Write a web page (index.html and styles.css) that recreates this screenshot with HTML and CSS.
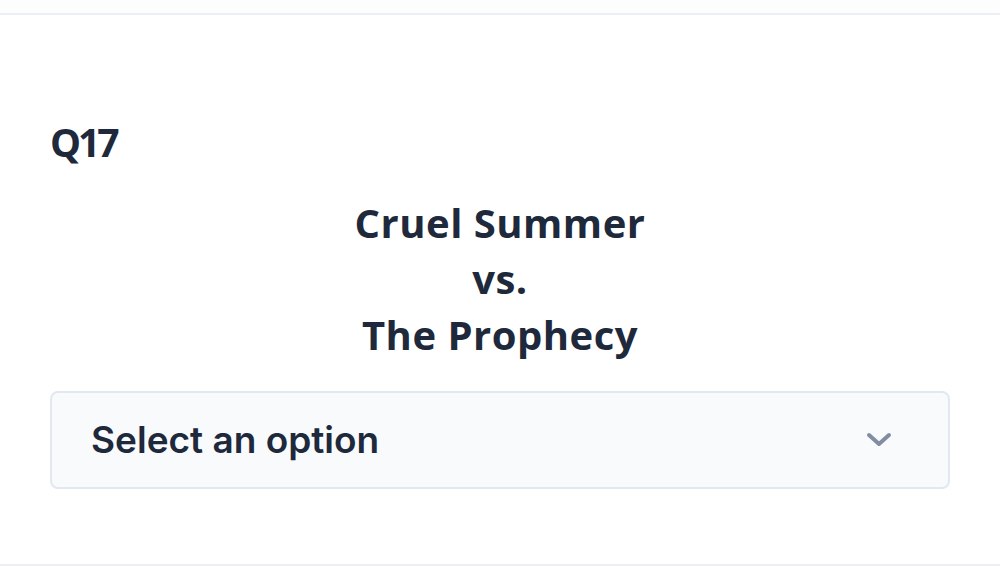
FILE: index.html
```html
<!DOCTYPE html>
<html lang="en">
<head>
  <meta charset="UTF-8">
  <meta name="viewport" content="width=device-width, initial-scale=1.0">
  <title>Q17</title>
  <link rel="stylesheet" href="styles.css">
</head>
<body>
  <div class="top-strip"></div>

  <div class="question">
    <h2 class="question-number">Q17</h2>

    <!-- Les deux titres à comparer -->
    <div class="matchup">
      <div>Cruel Summer</div>
      <div>vs.</div>
      <div>The Prophecy</div>
    </div>

    <div class="select-box">
      <span class="select-text">Select an option</span>
      <svg class="chevron" width="26" height="16" viewBox="0 0 26 16">
        <path d="M3 3 L13 12 L23 3" fill="none" stroke="#838da2" stroke-width="4" stroke-linecap="round" stroke-linejoin="round"/>
      </svg>
    </div>
  </div>

  <div class="bottom-line"></div>
</body>
</html>
```

FILE: styles.css
```css
* {
    box-sizing: border-box;
}
body, html {
    margin: 0;
    padding: 0;
    background-color: #fff;
    color: #1e293b;
    font-family: 'Inter', sans-serif;
}
.top-strip {
    height: 15px;
    background-color: #fdfdfd;
    border-bottom: 2px solid #eceef5;
}
.question {
    padding: 99px 50px 0;
    height: 549px;
}
.question-number {
    margin: 0;
    font-family: 'Open Sans', sans-serif;
    font-weight: 700;
    font-size: 39px;
    line-height: 56px;
    letter-spacing: -3px;
}
.matchup {
    margin-top: 25px;
    text-align: center;
    font-family: 'Open Sans', sans-serif;
    font-weight: 700;
    font-size: 40px;
    line-height: 56px;
    letter-spacing: 0.5px;
}
.select-box {
    margin-top: 28px;
    height: 98px;
    display: flex;
    align-items: center;
    justify-content: space-between;
    padding: 0 56px 2px 39px;
    background-color: #f8fafc;
    border: 2px solid #e2e8f0;
    border-radius: 8px;
}
.select-text {
    font-size: 37px;
    font-weight: 600;
}
.chevron {
    display: block;
    margin-top: 2px;
}
.bottom-line {
    height: 2px;
    background-color: #eceef5;
}
```
